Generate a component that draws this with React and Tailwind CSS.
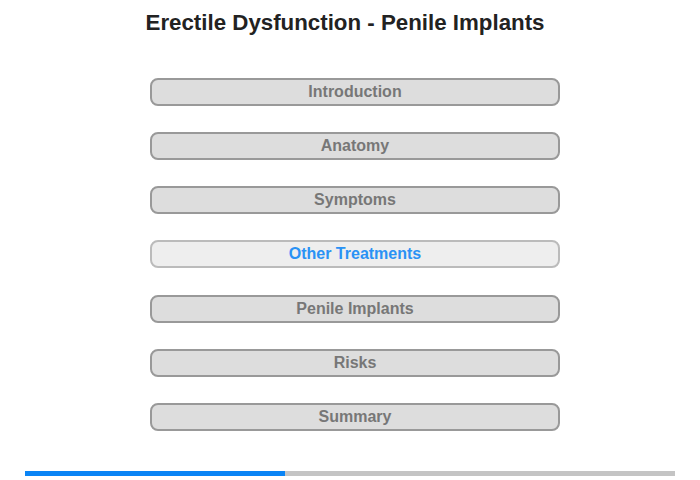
export default function App() {
  const items = [
    "Introduction",
    "Anatomy",
    "Symptoms",
    "Other Treatments",
    "Penile Implants",
    "Risks",
    "Summary",
  ];
  const active = 3;
  return (
    <div
      className="w-[700px] h-[480px] bg-white flex flex-col items-center overflow-hidden"
      style={{ fontFamily: '"Liberation Sans", Arial, sans-serif' }}
    >
      <h1 className="mt-[10px] mr-[10px] h-[26px] leading-[26px] text-[22.3px] font-bold text-[#222222]">
        Erectile Dysfunction - Penile Implants
      </h1>
      <div className="mt-[42px] ml-[10px] flex flex-col gap-[26.17px]">
        {items.map((t, i) => (
          <div
            key={t}
            className={
              i === active
                ? "box-border w-[410px] h-[28px] rounded-[8px] border-2 border-[#bbbbbb] bg-[#eeeeee] text-[#2a92f5] text-[16px] font-bold leading-[24px] text-center"
                : "box-border w-[410px] h-[28px] rounded-[8px] border-2 border-[#999999] bg-[#dddddd] text-[#777777] text-[16px] font-bold leading-[24px] text-center"
            }
          >
            {t}
          </div>
        ))}
      </div>
      <div className="mt-[40px] w-[650px] h-[5px] bg-[#c4c4c4] flex">
        <div className="w-[260px] h-full bg-[#0a84f5]" />
      </div>
    </div>
  );
}
